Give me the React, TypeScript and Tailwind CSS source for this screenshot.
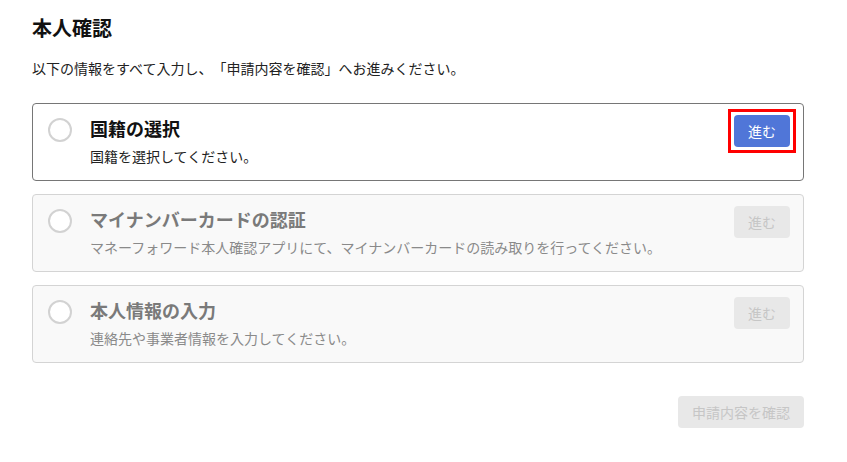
const font = { fontFamily: '"Noto Sans CJK JP", "Noto Sans", sans-serif' }

type Step = {
  title: string
  description: string
  active: boolean
}

const steps: Step[] = [
  { title: '国籍の選択', description: '国籍を選択してください。', active: true },
  {
    title: 'マイナンバーカードの認証',
    description: 'マネーフォワード本人確認アプリにて、マイナンバーカードの読み取りを行ってください。',
    active: false,
  },
  { title: '本人情報の入力', description: '連絡先や事業者情報を入力してください。', active: false },
]

function StepCard({ step }: { step: Step }) {
  return (
    <div
      className={
        step.active
          ? 'flex h-[78px] items-start rounded-[4px] border border-[#767676] bg-white pl-[15px] pr-[13px] pt-[11px]'
          : 'flex h-[78px] items-start rounded-[4px] border border-[#d4d4d4] bg-[#f9f9f9] pl-[15px] pr-[13px] pt-[11px]'
      }
    >
      <div className="mt-[3px] h-[24px] w-[24px] shrink-0 rounded-full border-2 border-[#d2d2d2] bg-white" />
      <div className="ml-[18px] flex min-w-0 flex-1 flex-col">
        <div
          className={
            step.active
              ? 'text-[18px] font-bold leading-[26px] text-[#111]'
              : 'text-[18px] font-bold leading-[26px] text-[#7a7a7a]'
          }
        >
          {step.title}
        </div>
        <div
          className={
            step.active
              ? 'mt-[5px] text-[14px] leading-[20px] text-[#222]'
              : 'mt-[5px] text-[14px] leading-[20px] text-[#8a8a8a]'
          }
        >
          {step.description}
        </div>
      </div>
      {step.active ? (
        <div className="-m-[6px] shrink-0 border-[3px] border-[#ff0000] p-[3px]">
          <button className="block h-[32px] w-[56px] rounded-[4px] bg-[#5076d8] text-[14px] text-white">
            進む
          </button>
        </div>
      ) : (
        <button
          disabled
          className="h-[32px] w-[56px] shrink-0 rounded-[4px] bg-[#e8e8e8] text-[14px] text-[#c6c6c6]"
        >
          進む
        </button>
      )}
    </div>
  )
}

export default function App() {
  return (
    <div
      className="min-h-[462px] w-[847px] bg-white px-[32px] pt-[13px] text-[#111] [text-spacing-trim:space-all]"
      style={font}
    >
      <h1 className="text-[20px] font-bold leading-[30px]">本人確認</h1>
      <p className="mt-[15px] text-[14px] leading-[20px] text-[#222]">
        以下の情報をすべて入力し、「申請内容を確認」へお進みください。
      </p>
      <div className="mt-[25px] flex w-[772px] flex-col gap-[13px]">
        {steps.map((s) => (
          <StepCard key={s.title} step={s} />
        ))}
      </div>
      <div className="mt-[33px] flex w-[772px] justify-end">
        <button
          disabled
          className="h-[32px] w-[126px] rounded-[4px] bg-[#e8e8e8] text-[14px] text-[#c6c6c6]"
        >
          申請内容を確認
        </button>
      </div>
    </div>
  )
}
